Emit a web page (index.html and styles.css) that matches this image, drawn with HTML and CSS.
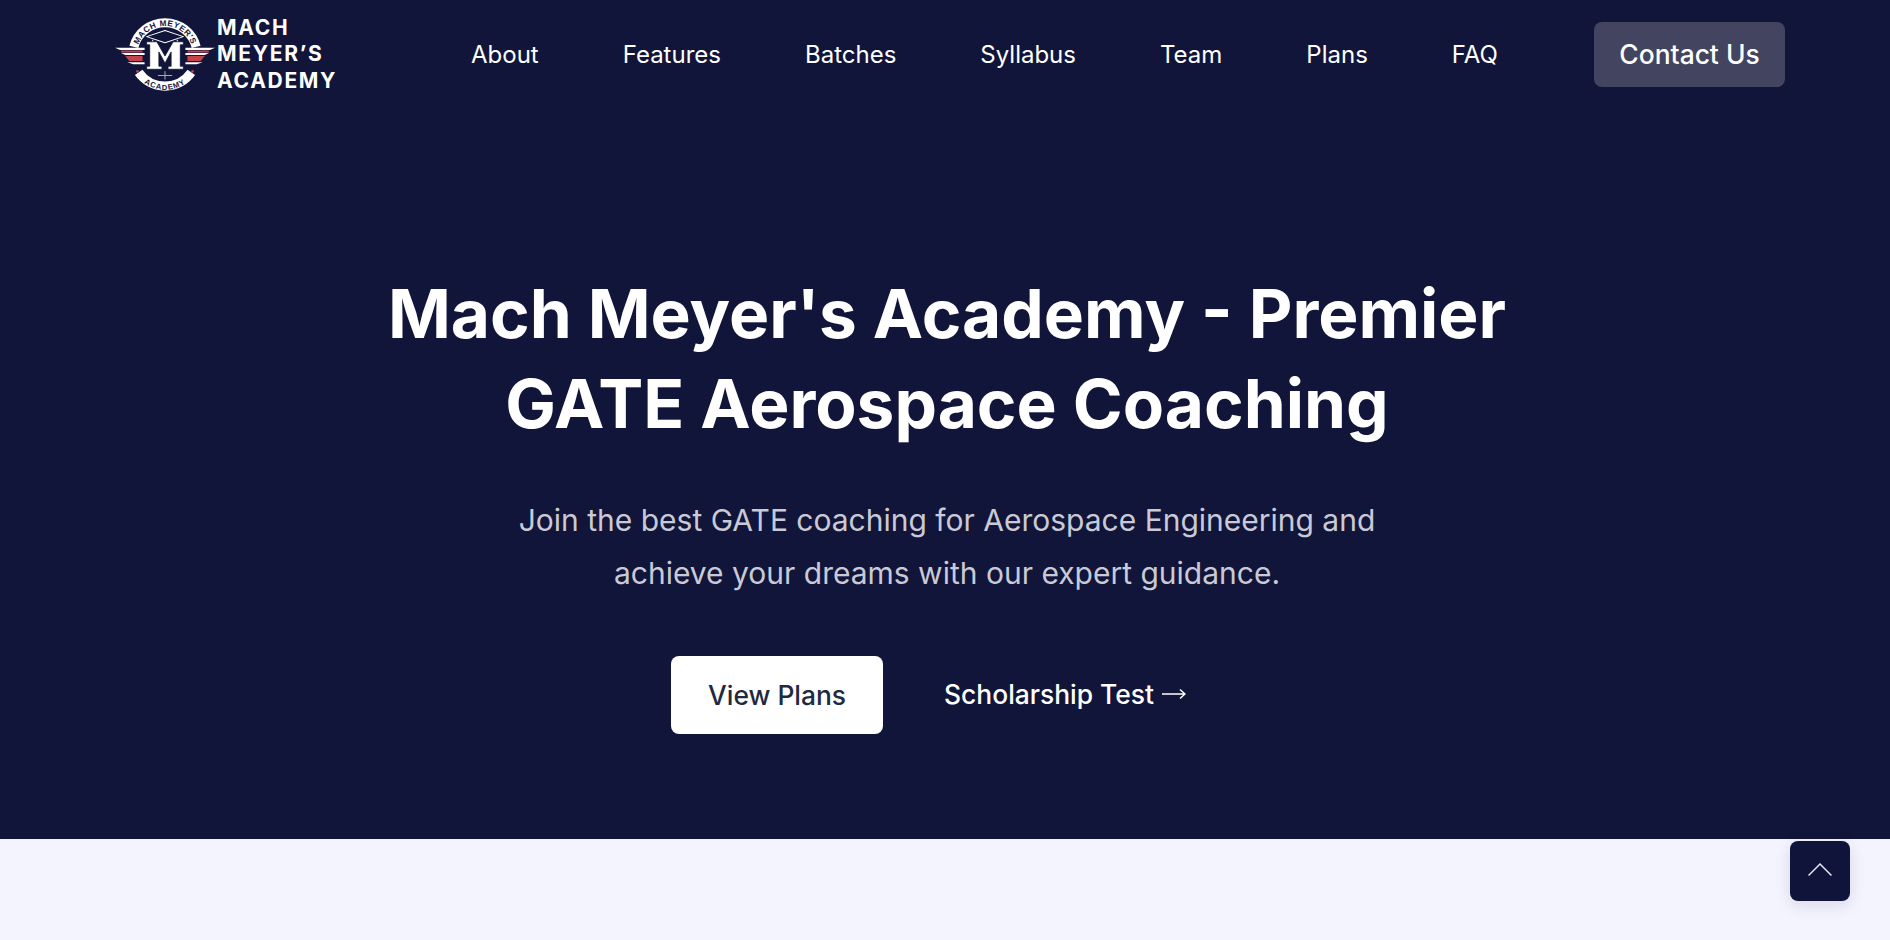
FILE: index.html
```html
<!DOCTYPE html>
<html lang="en">
<head>
<meta charset="utf-8">
<title>Mach Meyer's Academy</title>
<link rel="stylesheet" href="styles.css">
</head>
<body>
<section class="hero">
  <header class="topbar">
    <a class="brand" href="#">
      <svg class="brand-mark" viewBox="0 0 98 78" aria-hidden="true">
        <defs>
          <path id="arc-top" d="M21.500 38 A27.500 27.500 0 0 1 76.500 38"/>
          <path id="arc-bottom" d="M14 38 A35 35 0 0 0 84 38"/>
        </defs>
        <path class="ring" d="M18.500 31 A31.500 31.500 0 0 1 79.500 31"/>
        <path class="ring" d="M23.200 56 A31.500 31.500 0 0 0 74.800 56"/>
        <text class="arc-text arc-top"><textPath href="#arc-top" startOffset="50%" text-anchor="middle">MACH MEYER'S</textPath></text>
        <text class="arc-text arc-bottom"><textPath href="#arc-bottom" startOffset="50%" text-anchor="middle">ACADEMY</textPath></text>
        <path class="wing-white" d="M0 32H29V34H5Z M6 37H29V39H10Z M12 46H29V48H18Z"/>
        <path class="wing-red" d="M6 34.500H27V36.500H6Z M10 40H27V45H14Z"/>
        <path class="wing-white" d="M98 32H69V34H93Z M92 37H69V39H88Z M86 46H69V48H80Z"/>
        <path class="wing-red" d="M92 34.500H71V36.500H92Z M88 40H71V45H84Z"/>
        <path class="cap" d="M49 15 L67 21 L49 27 L31 21Z M37 24V27M61 24V27"/>
        <path class="letter" d="M31 26H41L49 40L57 26H67V29H64V50H67V53H52V50H55V36L49 47L43 36V50H46V53H31V50H34V29H31Z"/>
        <path class="compass" d="M49 55V63M42 59H56"/>
        <circle class="dot" cx="22" cy="55" r="1.300"/>
        <circle class="dot" cx="76" cy="55" r="1.300"/>
      </svg>
      <span class="brand-name">MACH<br>MEYER’S<br>ACADEMY</span>
    </a>
    <nav class="nav">
      <a href="#">About</a>
      <a href="#">Features</a>
      <a href="#">Batches</a>
      <a href="#">Syllabus</a>
      <a href="#">Team</a>
      <a href="#">Plans</a>
      <a href="#">FAQ</a>
    </nav>
    <a class="contact" href="#">Contact Us</a>
  </header>
  <div class="hero-body">
    <h1>Mach Meyer's Academy - Premier<br>GATE Aerospace Coaching</h1>
    <p>Join the best GATE coaching for Aerospace Engineering and<br>achieve your dreams with our expert guidance.</p>
    <div class="actions">
      <a class="btn-primary" href="#">View Plans</a>
      <a class="btn-link" href="#">Scholarship Test
        <svg class="arrow" viewBox="0 0 24 14" aria-hidden="true"><path d="M0 7H23M18 2.500L23 7L18 11.500"/></svg>
      </a>
    </div>
  </div>
</section>
<main class="next"></main>
<a class="to-top" href="#" aria-label="Back to top">
  <svg viewBox="0 0 24 24" aria-hidden="true"><path d="M.5 16.500 L12 5 L23.500 16.500"/></svg>
</a>
</body>
</html>
```
FILE: styles.css
```css
* { box-sizing: border-box; }
html, body { margin: 0; height: 100%; overflow: hidden; }
body { background: #f4f4ff; font-family: Inter, "Liberation Sans", sans-serif; color: #fff; }
a { color: inherit; text-decoration: none; }

.hero { background: #111539; height: 839px; display: flex; flex-direction: column; }
.topbar { height: 109px; padding: 0 105px 0 115px; display: flex; align-items: center; }
.brand { display: flex; align-items: center; gap: 2px; width: 356px; }
.brand-mark { width: 100px; height: 80px; flex: none; }
.brand-name { font-weight: 700; font-size: 21px; line-height: 26.500px; letter-spacing: 1.700px; }
.ring { fill: none; stroke: #fff; stroke-width: 9; }
.arc-text { font-family: "Liberation Sans", sans-serif; font-weight: 700; fill: #111539; }
.arc-top { font-size: 8px; letter-spacing: .5px; }
.arc-bottom { font-size: 7.500px; letter-spacing: .8px; }
.wing-white { fill: #fff; }
.wing-red { fill: #c4424b; }
.cap { fill: none; stroke: #fff; stroke-width: 1; stroke-linejoin: round; }
.letter { fill: #fff; stroke: #111539; stroke-width: .8; }
.compass { stroke: #a5a7ba; stroke-width: 1; fill: none; }
.dot { fill: #c4424b; }

.nav { display: flex; gap: 84px; font-size: 24px; margin-right: 96px; }
.contact { background: #434460; width: 191px; height: 65px; border-radius: 8px; font-size: 26.400px; font-weight: 500; line-height: 1; padding-bottom: 1px; display: flex; align-items: center; justify-content: center; margin-left: auto; }

.hero-body { flex: 1; display: flex; flex-direction: column; align-items: center; text-align: center; padding: 160px 0 0 4px; }
h1 { margin: 0; font-size: 67.500px; line-height: 90px; font-weight: 700; }
p { margin: 45px 0 0; font-size: 30px; line-height: 53px; color: #c9cad6; }
.actions { display: flex; align-items: center; gap: 61px; margin: 56px 37px 0 0; }
.btn-primary { background: #fff; color: #1d2a3f; width: 212px; height: 78px; padding-bottom: 1px; border-radius: 8px; font-size: 26.400px; font-weight: 500; display: flex; align-items: center; justify-content: center; }
.btn-link { font-size: 26.400px; font-weight: 500; display: flex; align-items: center; gap: 8px; padding-bottom: 2px; }
.arrow { width: 24px; height: 14px; fill: none; stroke: #fff; stroke-width: 1.500; }

.next { height: 101px; }
.to-top { position: fixed; left: 1790px; top: 841px; width: 60px; height: 60px; background: #10133a; border-radius: 8px; display: flex; align-items: center; justify-content: center; box-shadow: 0 4px 16px rgba(16, 19, 58, .12); }
.to-top svg { width: 24px; height: 24px; fill: none; stroke: #eceaf2; stroke-width: 1.500; }
```
